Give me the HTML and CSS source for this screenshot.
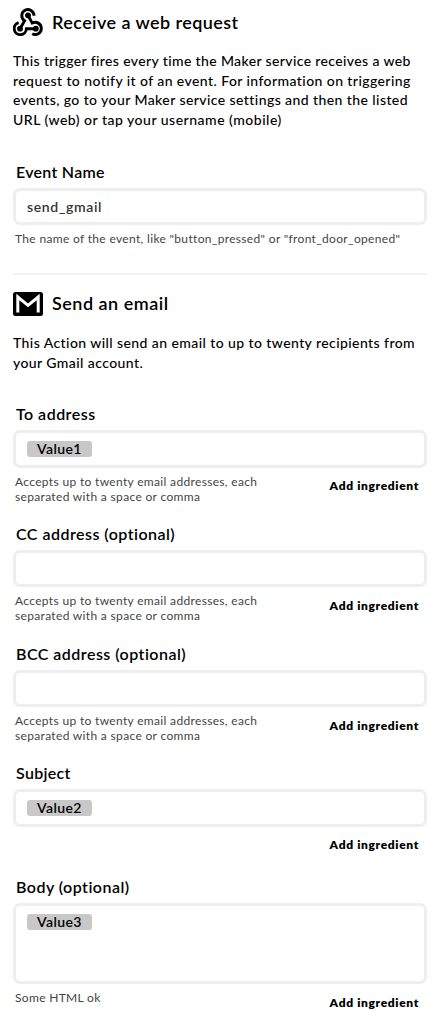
FILE: index.html
```html
<!DOCTYPE html>
<html lang="en">
<head>
<meta charset="utf-8">
<title>Applet settings</title>
<link rel="stylesheet" href="styles.css">
</head>
<body>
<main class="page">
  <section class="trigger">
    <header class="heading">
      <svg class="icon" width="30" height="29" viewBox="0 0 30 29" fill="none" stroke="#000" stroke-width="2.9">
        <path d="M7 20.7 L11.6 12.8 A6.1 6.1 0 1 1 21 7.7"/>
        <path d="M15 7.3 L19.2 15.1 A6.1 6.1 0 1 1 19.2 25.7"/>
        <path d="M22.8 20.7 H13.4 A6.1 6.1 0 1 1 5.6 14.7"/>
        <g fill="#000" stroke="none"><circle cx="15" cy="7.3" r="2.9"/><circle cx="7" cy="20.7" r="2.9"/><circle cx="22.8" cy="20.7" r="2.9"/></g>
      </svg>
      <h2 class="title title-trigger">Receive a web request</h2>
    </header>
    <p class="description"><span class="first-line">This trigger fires every time the Maker service receives a web</span><br>request to notify it of an event. For information on triggering<br>events, go to your Maker service settings and then the listed<br><span class="last-line">URL (web) or tap your username (mobile)</span></p>
    <div class="field field-event">
      <label class="label">Event Name</label>
      <div class="box"><span class="value">send_gmail</span></div>
      <div class="foot"><p class="help help-event">The name of the event, like "button_pressed" or "front_door_opened"</p></div>
    </div>
  </section>
  <section class="action">
    <header class="heading">
      <svg class="icon" width="30" height="24" viewBox="0 0 30 24">
        <rect width="30" height="24" rx="2.5" fill="#000"/>
        <path d="M4.8 20.5V5L15 13.4 25.2 5V20.5" fill="none" stroke="#fff" stroke-width="3"/>
      </svg>
      <h2 class="title title-action">Send an email</h2>
    </header>
    <p class="description">This Action will send an email to up to twenty recipients from<br>your Gmail account.</p>
    <div class="field field-to">
      <label class="label">To address</label>
      <div class="box box-tall"><span class="chip">Value1</span></div>
      <div class="foot"><p class="help">Accepts up to twenty email addresses, each<br>separated with a space or comma</p><a class="add">Add ingredient</a></div>
    </div>
    <div class="field field-cc">
      <label class="label">CC address (optional)</label>
      <div class="box"></div>
      <div class="foot"><p class="help">Accepts up to twenty email addresses, each<br>separated with a space or comma</p><a class="add">Add ingredient</a></div>
    </div>
    <div class="field field-bcc">
      <label class="label">BCC address (optional)</label>
      <div class="box"></div>
      <div class="foot"><p class="help">Accepts up to twenty email addresses, each<br>separated with a space or comma</p><a class="add">Add ingredient</a></div>
    </div>
    <div class="field field-subject">
      <label class="label">Subject</label>
      <div class="box box-tall"><span class="chip">Value2</span></div>
      <div class="foot"><a class="add">Add ingredient</a></div>
    </div>
    <div class="field field-body">
      <label class="label">Body (optional)</label>
      <div class="box box-area"><span class="chip">Value3</span></div>
      <div class="foot"><p class="help">Some HTML ok</p><a class="add">Add ingredient</a></div>
    </div>
  </section>
</main>
</body>
</html>
```
FILE: styles.css
```css
* { box-sizing: border-box; }
body { margin: 0; background: #fff; color: #000; font-family: Lato, "Open Sans", sans-serif; }
h2, p { margin: 0; }
.page { width: 438px; height: 1021px; padding: 8px 11px 0 13px; overflow: hidden; white-space: nowrap; }
.trigger { height: 267px; border-bottom: 2px solid #f3f3f3; }
.action { padding-top: 17px; }
.heading { display: flex; gap: 9px; height: 29px; }
.action .heading { height: 24px; }
.icon { flex: none; }
.title { font-size: 18px; line-height: 29px; font-weight: 600; letter-spacing: 0.42px; }
.action .title { line-height: 23px; letter-spacing: 0.5px; }
.description { margin-top: 14px; font-size: 14px; line-height: 19.6px; letter-spacing: 0.42px; font-weight: 500; }
.first-line { letter-spacing: 0.37px; }
.last-line { letter-spacing: 0.5px; }
.action .description { margin-top: 17px; }
.field { display: flex; flex-direction: column; }
.field-event { height: 110px; margin-top: 34px; }
.field-to { height: 120px; margin-top: 33px; }
.field-cc { height: 120px; }
.field-bcc { height: 119px; }
.field-subject { height: 114px; }
.field-body { height: 120px; }
.label { height: 25px; flex: none; padding-left: 3px; font-size: 16px; line-height: 17px; font-weight: 600; letter-spacing: 0.47px; }
.field-event .label { letter-spacing: 0.27px; }
.field-subject .label { letter-spacing: 0.3px; }
.box { height: 37px; flex: none; display: flex; align-items: flex-start; border: 3px solid #eee; border-radius: 7px; padding: 8px 11px; }
.box-tall { height: 38px; }
.box-area { height: 81px; }
.value { font-size: 14px; line-height: 15px; font-weight: 600; letter-spacing: 0.65px; color: #333; }
.chip { width: 65px; height: 16px; padding-left: 10px; border-radius: 3px; background: #c8c8c8; font-size: 14px; line-height: 16px; font-weight: 600; letter-spacing: 0.4px; }
.foot { display: flex; padding: 6px 8px 0 2px; }
.help { font-size: 12px; line-height: 15px; letter-spacing: 0.33px; color: #444; }
.add { margin: 4px 0 0 auto; font-size: 12px; line-height: 17px; font-weight: 800; letter-spacing: 0.65px; }
.box-tall + .foot .add { margin-top: 3px; }
```
